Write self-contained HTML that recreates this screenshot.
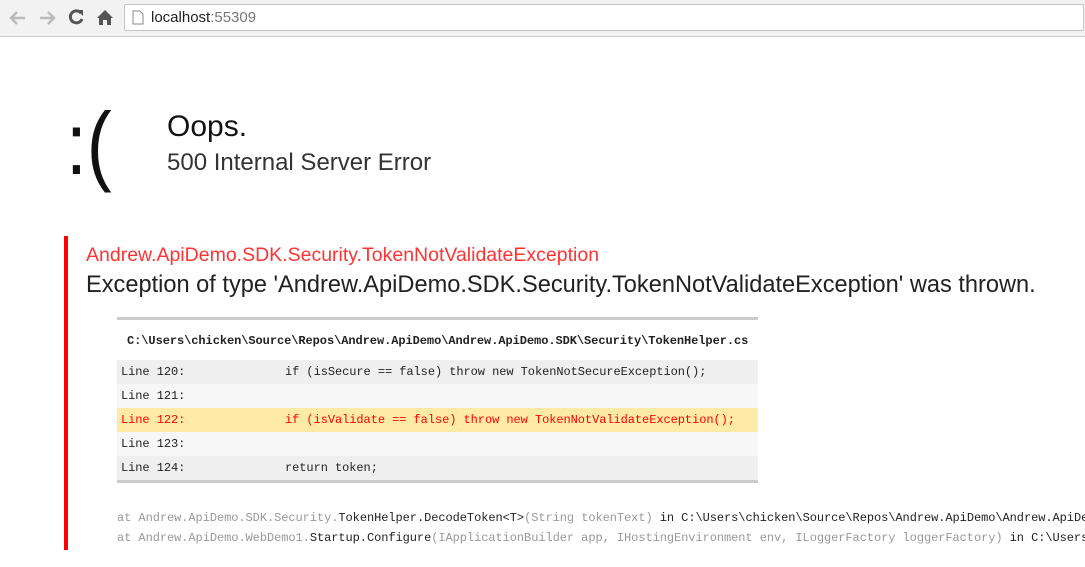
<!DOCTYPE html>
<html><head><meta charset="utf-8"><style>
*{margin:0;padding:0;box-sizing:border-box}
html,body{width:1085px;height:567px;overflow:hidden}
body{background:#fff;font-family:"Liberation Sans",sans-serif;position:relative}
.clip{position:absolute;left:0;top:0;width:1085px;height:567px;overflow:hidden}
.bar{position:absolute;left:0;top:0;width:1085px;height:37px;background:#f2f2f2;border-bottom:1px solid #c8c8c8}
.url{position:absolute;left:124px;top:4px;width:960px;height:27px;background:#fff;border:1px solid #c4c4c4;border-radius:2px;font-size:15px;line-height:25px;padding-left:26px;color:#222}
.url span{color:#777}
.abs{position:absolute;white-space:nowrap}
.mono{font-family:"Liberation Mono",monospace;font-size:12px;letter-spacing:-0.06px}
.row{position:absolute;left:117px;width:641px;height:24px;line-height:24px;padding-left:4px}
</style></head><body><div class="clip">
<div class="bar">
<svg class="abs" style="left:8px;top:9px" width="20" height="18" viewBox="0 0 20 18"><path d="M17 9H4M9 3L3 9l6 6" stroke="#bbb" stroke-width="2.5" fill="none"/></svg>
<svg class="abs" style="left:37px;top:9px" width="20" height="18" viewBox="0 0 20 18"><path d="M3 9h13M11 3l6 6-6 6" stroke="#bbb" stroke-width="2.5" fill="none"/></svg>
<svg class="abs" style="left:67px;top:8px" width="18" height="18" viewBox="0 0 18 18"><path d="M14 5A6 6 0 1 0 15 11" stroke="#555" stroke-width="3" fill="none"/><path d="M10 2h6v6z" fill="#555"/></svg>
<svg class="abs" style="left:96px;top:8px" width="18" height="18" viewBox="0 0 18 18"><path d="M9 2L1 10h2v7h4v-5h4v5h4v-7h2z" fill="#555"/></svg>
<div class="url"><svg class="abs" style="left:7px;top:5px" width="12" height="15" viewBox="0 0 12 15"><path d="M1 1h7l3 3v10H1z" fill="#fff" stroke="#888"/></svg>localhost<span>:55309</span></div>
</div>
<div class="abs" style="left:66px;top:84px;font-size:88px;line-height:120px;color:#111;transform:scaleX(0.85);transform-origin:left top">:(</div>
<div class="abs" style="left:167px;top:110px;font-size:30px;color:#111">Oops.</div>
<div class="abs" style="left:167px;top:149px;font-size:24px;color:#333">500 Internal Server Error</div>
<div class="abs" style="left:64px;top:236px;width:4px;height:314px;background:#f00"></div>
<div class="abs" style="left:86px;top:244px;font-size:19.5px;color:#f33">Andrew.ApiDemo.SDK.Security.TokenNotValidateException</div>
<div class="abs" style="left:86px;top:272px;font-size:23.6px;color:#222">Exception of type 'Andrew.ApiDemo.SDK.Security.TokenNotValidateException' was thrown.</div>
<div class="abs" style="left:117px;top:317px;width:641px;height:3px;background:#ccc"></div>
<div class="abs mono" style="left:127px;top:334px;font-weight:bold;color:#222">C:\Users\chicken\Source\Repos\Andrew.ApiDemo\Andrew.ApiDemo.SDK\Security\TokenHelper.cs</div>
<div class="row mono" style="top:360px;background:#efefef;color:#222">Line 120:<span class="abs" style="left:168px">if (isSecure == false) throw new TokenNotSecureException();</span></div>
<div class="row mono" style="top:384px;background:#f7f7f7;color:#222">Line 121:</div>
<div class="row mono" style="top:408px;background:#ffeaa6;color:#f00">Line 122:<span class="abs" style="left:168px">if (isValidate == false) throw new TokenNotValidateException();</span></div>
<div class="row mono" style="top:432px;background:#f7f7f7;color:#222">Line 123:</div>
<div class="row mono" style="top:456px;background:#efefef;color:#222">Line 124:<span class="abs" style="left:168px">return token;</span></div>
<div class="abs" style="left:117px;top:480px;width:641px;height:3px;background:#ccc"></div>
<div class="abs mono" style="left:117px;top:511px;color:#999">at Andrew.ApiDemo.SDK.Security.<span style="color:#222">TokenHelper.DecodeToken&lt;T&gt;</span>(String tokenText) <span style="color:#222">in C:\Users\chicken\Source\Repos\Andrew.ApiDemo\Andrew.ApiDemo.SDK</span></div>
<div class="abs mono" style="left:117px;top:531px;color:#999">at Andrew.ApiDemo.WebDemo1.<span style="color:#222">Startup.Configure</span>(IApplicationBuilder app, IHostingEnvironment env, ILoggerFactory loggerFactory) <span style="color:#222">in C:\Users\chicken</span></div>
</div></body></html>
